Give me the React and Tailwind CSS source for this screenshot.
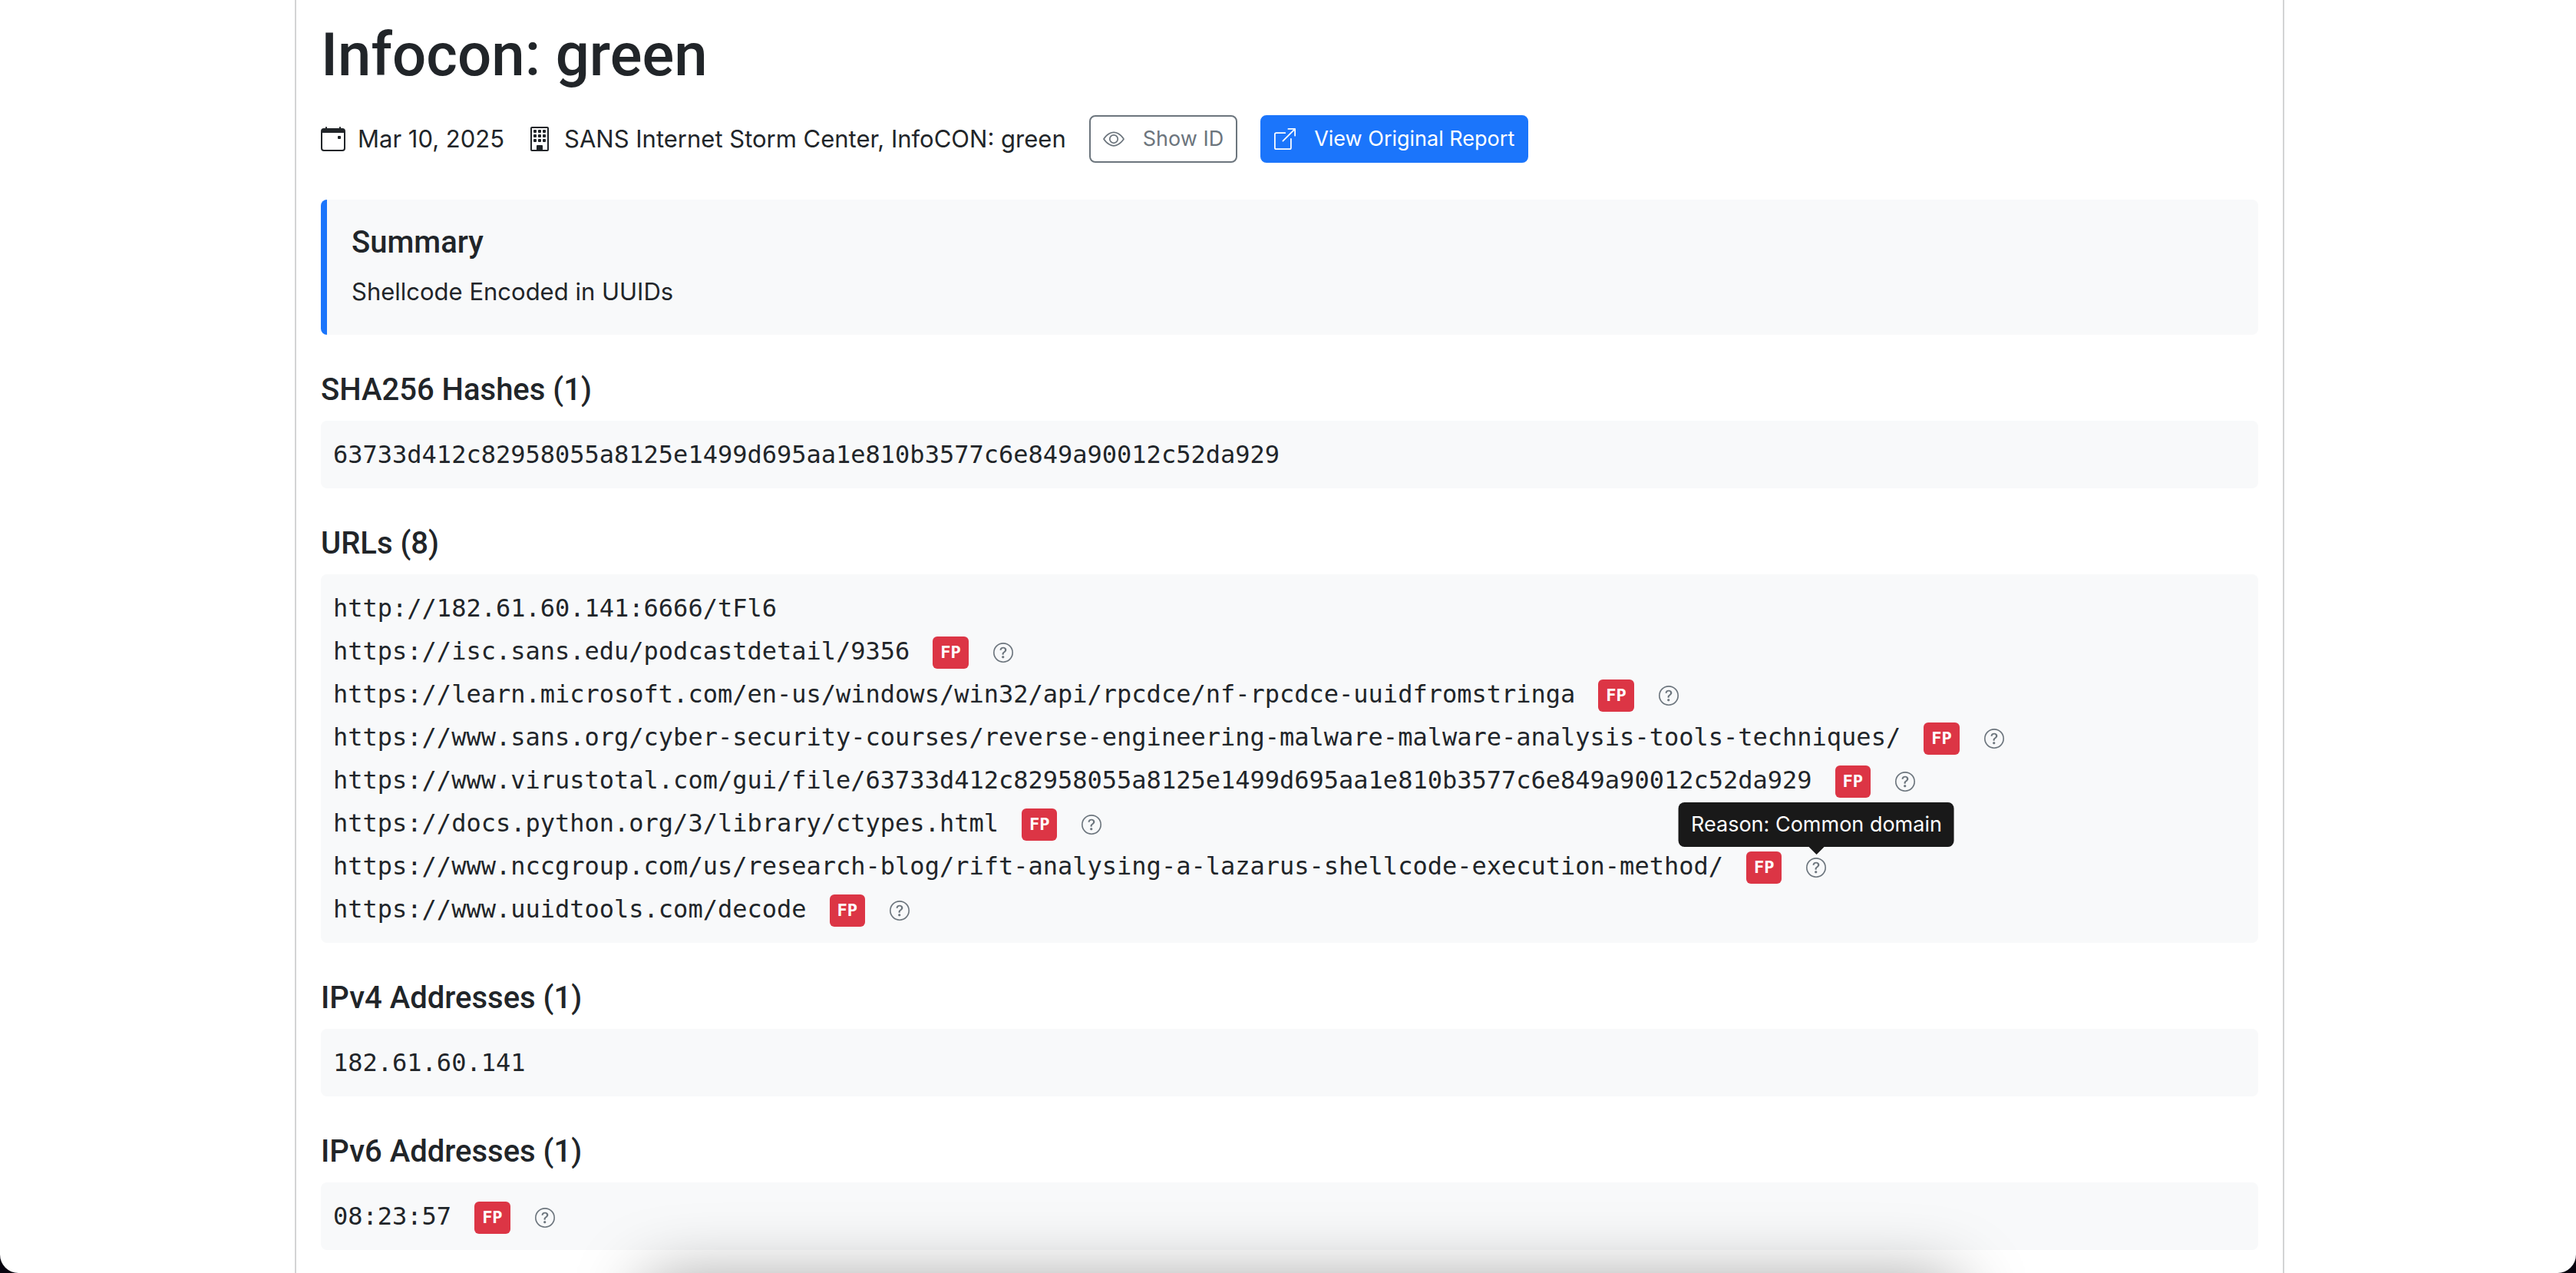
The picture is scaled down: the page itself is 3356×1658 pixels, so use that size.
import {
  BsBoxArrowUpRight,
  BsBuilding,
  BsCalendarEvent,
  BsEye,
  BsQuestionCircle,
} from "react-icons/bs";

const SECTIONS = [
  {
    title: "SHA256 Hashes",
    items: [
      { value: "63733d412c82958055a8125e1499d695aa1e810b3577c6e849a90012c52da929" },
    ],
  },
  {
    title: "URLs",
    items: [
      { value: "http://182.61.60.141:6666/tFl6" },
      { value: "https://isc.sans.edu/podcastdetail/9356", fp: true },
      {
        value:
          "https://learn.microsoft.com/en-us/windows/win32/api/rpcdce/nf-rpcdce-uuidfromstringa",
        fp: true,
      },
      {
        value:
          "https://www.sans.org/cyber-security-courses/reverse-engineering-malware-malware-analysis-tools-techniques/",
        fp: true,
      },
      {
        value:
          "https://www.virustotal.com/gui/file/63733d412c82958055a8125e1499d695aa1e810b3577c6e849a90012c52da929",
        fp: true,
      },
      { value: "https://docs.python.org/3/library/ctypes.html", fp: true },
      {
        value:
          "https://www.nccgroup.com/us/research-blog/rift-analysing-a-lazarus-shellcode-execution-method/",
        fp: true,
        reason: "Common domain",
      },
      { value: "https://www.uuidtools.com/decode", fp: true },
    ],
  },
  { title: "IPv4 Addresses", items: [{ value: "182.61.60.141" }] },
  { title: "IPv6 Addresses", items: [{ value: "08:23:57", fp: true }] },
];

function ReasonTooltip({ text }) {
  return (
    <span
      role="tooltip"
      className="absolute bottom-full left-1/2 z-10 mb-[14px] -translate-x-1/2 rounded-lg bg-[#191919] px-4 py-2 font-['Inter',sans-serif] text-[27px] leading-[42px] whitespace-nowrap text-white"
    >
      Reason: {text}
      <svg
        viewBox="0 0 20 10"
        aria-hidden="true"
        className="absolute top-full left-1/2 h-[10px] w-5 -translate-x-1/2 fill-[#191919]"
      >
        <path d="M0 0h20L10 10z" />
      </svg>
    </span>
  );
}

function Indicator({ value, fp, reason }) {
  return (
    <li className="py-1">
      <span className="break-words">{value}</span>
      {fp && (
        <>
          <span className="ml-[30px] inline-block rounded-md bg-[#dc3545] px-[10px] py-[10px] align-middle text-[22px] leading-[22px] font-bold text-white">
            FP
          </span>
          <button
            type="button"
            aria-label="Why is this a false positive?"
            className="relative ml-8 inline-block align-middle text-[#6c757d]"
          >
            <BsQuestionCircle className="size-[26px]" />
            {reason && <ReasonTooltip text={reason} />}
          </button>
        </>
      )}
    </li>
  );
}

function SectionHeading({ children }) {
  return (
    <h2 className="mb-4 font-['Roboto',sans-serif] text-[40px] leading-[48px] font-medium">
      {children}
    </h2>
  );
}

function IndicatorSection({ title, items }) {
  return (
    <section>
      <SectionHeading>
        {title} ({items.length})
      </SectionHeading>
      <ul className="rounded-lg bg-[#f8f9fa] p-4 font-['DejaVu_Sans_Mono',monospace] text-[32px] leading-[48px]">
        {items.map((item) => (
          <Indicator key={item.value} {...item} />
        ))}
      </ul>
    </section>
  );
}

export default function App() {
  return (
    <div className="h-screen bg-[#08040f]">
      <div className="relative h-full overflow-hidden rounded-b-3xl bg-white px-[384px] font-['Inter',sans-serif] text-[31px] leading-[48px] text-[#212529]">
        <main className="mr-[-4px] flex min-h-full flex-col gap-12 border-x-2 border-[#d3d4d5] px-8 pt-6 pb-12">
          <header>
            <h1 className="font-['Roboto',sans-serif] text-[78px] leading-[96px] font-medium">
              Infocon: green
            </h1>
            <div className="mt-[30px] flex flex-wrap items-center gap-[30px]">
              <div className="flex items-center gap-4">
                <BsCalendarEvent className="size-8" />
                <time dateTime="2025-03-10">Mar 10, 2025</time>
              </div>
              <div className="flex items-center gap-4">
                <BsBuilding className="size-8" />
                <span>SANS Internet Storm Center, InfoCON: green</span>
              </div>
              <button
                type="button"
                className="flex items-center gap-6 rounded-lg border-2 border-[#6c757d] px-4 py-2 text-[27px] leading-[42px] text-[#6c757d]"
              >
                <BsEye className="size-7" />
                Show ID
              </button>
              <a
                href="#original-report"
                className="flex items-center gap-6 rounded-lg border-2 border-[#1b75fb] bg-[#1b75fb] px-4 py-2 text-[27px] leading-[42px] text-white"
              >
                <BsBoxArrowUpRight className="size-7" />
                View Original Report
              </a>
            </div>
          </header>

          <section className="rounded-lg border-l-8 border-[#1b75fb] bg-[#f8f9fa] p-8">
            <SectionHeading>Summary</SectionHeading>
            <p>Shellcode Encoded in UUIDs</p>
          </section>

          {SECTIONS.map((section) => (
            <IndicatorSection key={section.title} {...section} />
          ))}
        </main>

        <div
          aria-hidden="true"
          className="pointer-events-none absolute top-full right-[24%] left-1/4 mt-2 h-24 rounded-3xl shadow-[0_0_90px_rgba(0,0,0,0.38)]"
        />
      </div>
    </div>
  );
}
